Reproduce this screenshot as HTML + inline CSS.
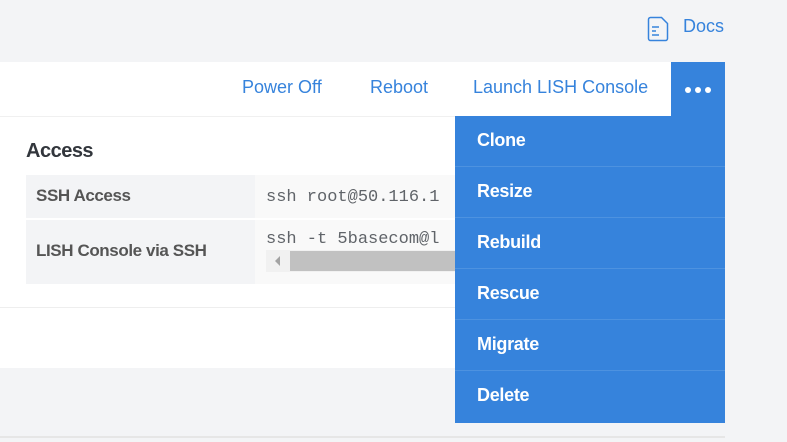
<!DOCTYPE html>
<html><head><style>
*{margin:0;padding:0;box-sizing:border-box}
body{width:787px;height:442px;background:#f3f4f6;font-family:"Liberation Sans",sans-serif;position:relative;overflow:hidden}
.a{position:absolute}
.nav{color:#3683dc;font-size:18px;top:77px}
.menu div{position:absolute;left:0;width:270px;height:51px;border-bottom:1px solid #4d92e0;color:#fff;font-size:18px;padding:14px 0 0 22px;font-weight:bold;letter-spacing:-0.3px}
</style></head><body>
<svg class="a" style="left:647px;top:16px" width="24" height="26" viewBox="0 0 24 26"><path d="M3.5 1.5h11l6 6V22.5a2 2 0 0 1-2 2h-15a2 2 0 0 1-2-2V3.5a2 2 0 0 1 2-2z" fill="none" stroke="#3683dc" stroke-width="1.5"/><path d="M5 11h7M5 15h4M5 19h7" stroke="#3683dc" stroke-width="1.5"/></svg>
<div class="a" style="left:683px;top:16px;color:#3683dc;font-size:18px">Docs</div>
<div class="a" style="left:0;top:62px;width:671px;height:54px;background:#fff"></div>
<div class="a nav" style="left:242px">Power Off</div>
<div class="a nav" style="left:370px">Reboot</div>
<div class="a nav" style="left:473px">Launch LISH Console</div>
<div class="a" style="left:671px;top:62px;width:54px;height:54px;background:#3683dc"></div>
<div class="a" style="left:685px;top:87px;width:6px;height:6px;border-radius:3px;background:#fff;box-shadow:10px 0 #fff,20px 0 #fff"></div>
<div class="a" style="left:0;top:116px;width:725px;height:252px;background:#fff;border-top:1px solid #f0f0f0"></div>
<div class="a" style="left:0;top:307px;width:725px;height:1px;background:#eee"></div>
<div class="a" style="left:26px;top:140px;font-size:20px;color:#32363c;font-weight:bold;letter-spacing:-0.5px">Access</div>
<div class="a" style="left:26px;top:175px;width:229px;height:109px;background:#f3f4f6"></div>
<div class="a" style="left:255px;top:175px;width:200px;height:109px;background:#f9f9f9"></div>
<div class="a" style="left:26px;top:218px;width:429px;height:2px;background:#fff"></div>
<div class="a" style="left:36px;top:186px;font-size:17px;color:#555;font-weight:bold;letter-spacing:-0.4px">SSH Access</div>
<div class="a" style="left:36px;top:241px;font-size:17px;color:#555;font-weight:bold;letter-spacing:-0.4px">LISH Console via SSH</div>
<div class="a" style="left:266px;top:188px;font-family:'Liberation Mono',monospace;font-size:17px;color:#606469;white-space:nowrap">ssh root@50.116.1</div>
<div class="a" style="left:266px;top:230px;font-family:'Liberation Mono',monospace;font-size:17px;color:#606469;white-space:nowrap">ssh -t 5basecom@l</div>
<div class="a" style="left:266px;top:250px;width:189px;height:22px;background:#f1f1f1"></div>
<div class="a" style="left:290px;top:251px;width:165px;height:20px;background:#c1c1c1"></div>
<div class="a" style="left:275px;top:256px;width:0;height:0;border-top:5px solid transparent;border-bottom:5px solid transparent;border-right:5px solid #a3a3a3"></div>
<div class="a" style="left:0;top:436px;width:725px;height:2px;background:#e6e6e6"></div>
<div class="a menu" style="left:455px;top:116px;width:270px;height:307px;background:#3683dc">
<div style="top:0">Clone</div><div style="top:51px">Resize</div><div style="top:102px">Rebuild</div><div style="top:153px">Rescue</div><div style="top:204px">Migrate</div><div style="top:255px;border:none">Delete</div>
</div>
</body></html>
